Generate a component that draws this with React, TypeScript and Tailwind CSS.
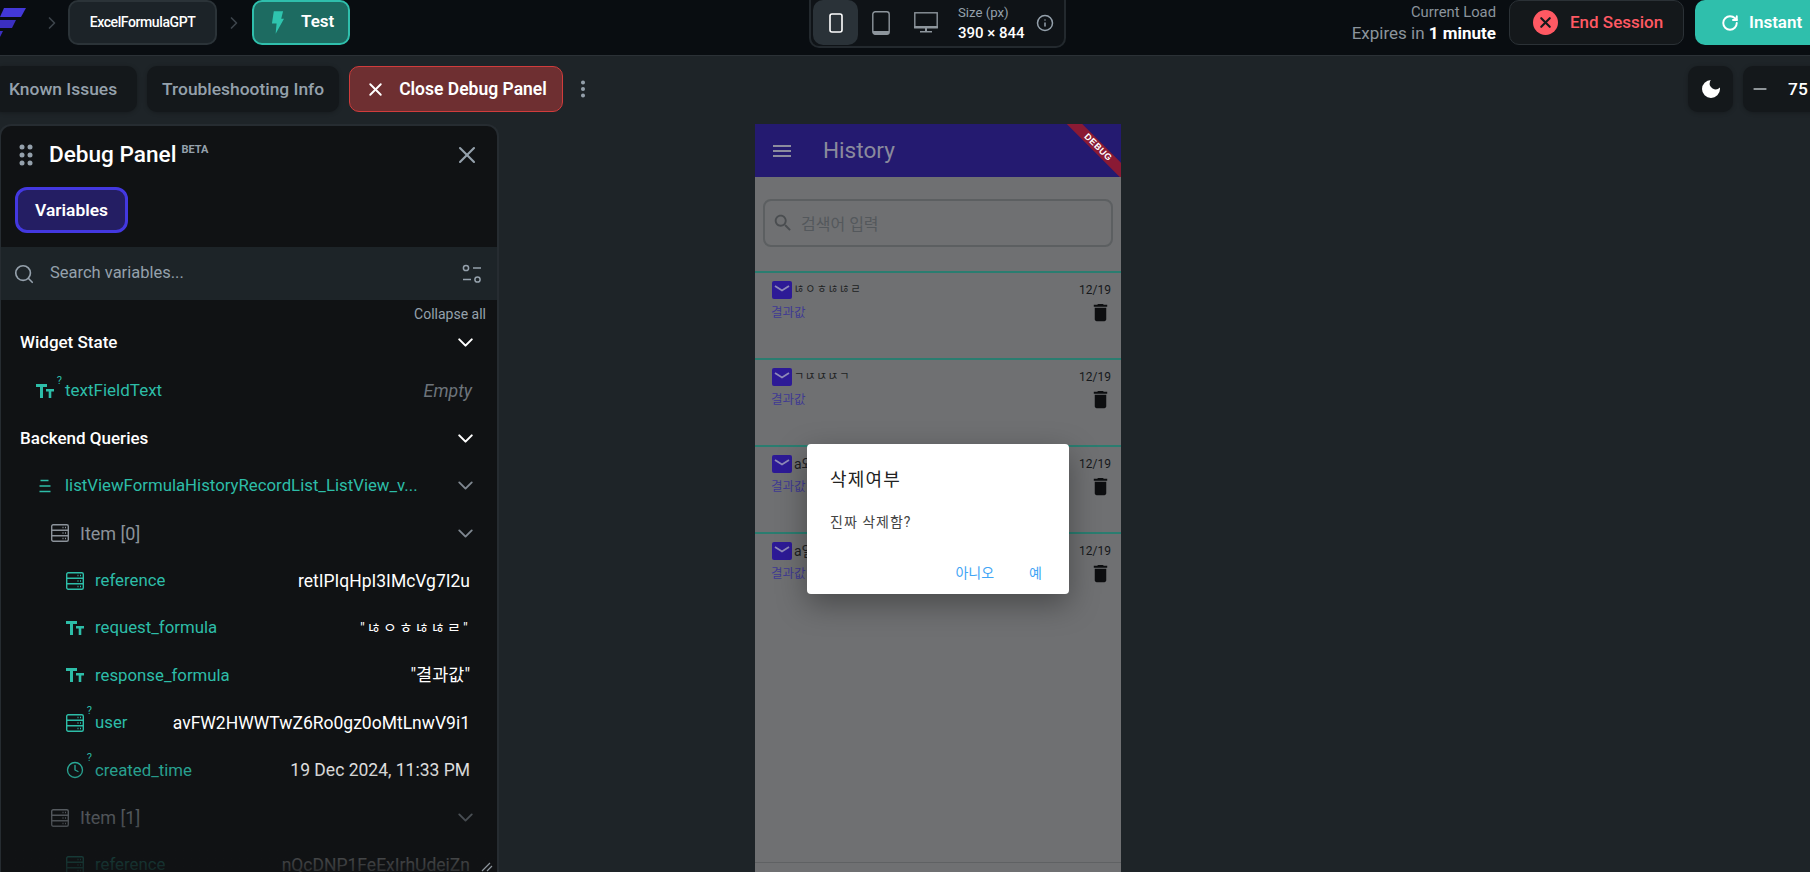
import { ChevronDown, ChevronRight, Clock, Info, Minus, MoreVertical, RotateCw, Search, X } from "lucide-react";
import type { ReactNode } from "react";

const sans = "font-['Roboto','Noto_Sans_CJK_KR',sans-serif]";

function TextIcon() {
  return (
    <svg viewBox="0 0 18 14" className="w-[18px] h-[14px] fill-current">
      <path d="M0 0h11v3H7v11H4V3H0zM10 5h8v2.4h-2.7V14h-2.6V7.4H10z" />
    </svg>
  );
}

function StorageIcon() {
  return (
    <svg viewBox="0 0 18 18" className="w-[18px] h-[18px] fill-none stroke-current" strokeWidth="1.4">
      <rect x="0.7" y="0.7" width="16.6" height="16.6" rx="1.5" />
      <path d="M1 6.3h16M1 11.7h16" />
      <path d="M11.5 3.5h1M14 3.5h1M11.5 9h1M14 9h1M11.5 14.5h1M14 14.5h1" />
    </svg>
  );
}

function ListIcon() {
  return (
    <svg viewBox="0 0 12 14" className="w-[12px] h-[14px] stroke-current" strokeWidth="1.4">
      <path d="M1.5 1.5h8M0.5 7h11M0.5 12.5h11" />
    </svg>
  );
}

function Optional({ children }: { children: ReactNode }) {
  return (
    <span className="relative flex items-center justify-center">
      {children}
      <span className="absolute -top-[9px] -right-[8px] text-[11px] leading-none">?</span>
    </span>
  );
}

function Row({
  indent,
  icon,
  label,
  value,
  chevron,
  muted,
  valueClass,
}: {
  indent: string;
  icon: ReactNode;
  label: string;
  value?: string;
  chevron?: boolean;
  muted?: boolean;
  valueClass?: string;
}) {
  return (
    <div className={`flex items-center h-[47.4px] ${muted ? "text-[18px] text-[#8b929a]" : "text-[16.8px] text-[#2dbda8]"} ${indent}`}>
      <span className="w-[18px] flex justify-center shrink-0">{icon}</span>
      <span className="ml-[11px] truncate">{label}</span>
      {value && <span className={`ml-auto mr-[27px] whitespace-nowrap ${valueClass ?? "text-[17.5px] text-white"}`}>{value}</span>}
      {chevron && <ChevronDown className="ml-auto mr-[19px] w-[25px] h-[25px] text-[#7f8790] shrink-0" strokeWidth={1.8} />}
    </div>
  );
}

function Section({ title }: { title: string }) {
  return (
    <div className="flex items-center justify-between h-[47.4px] pl-[19px] pr-[19px] text-[17px] font-medium text-white">
      {title}
      <ChevronDown className="w-[25px] h-[25px]" strokeWidth={2} />
    </div>
  );
}

function HistoryRow({ title, titleClass }: { title: string; titleClass?: string }) {
  return (
    <div className="h-[87px] border-t-2 border-[#2a7d70] relative pl-[9px] pr-[10px] pt-[7px] flex justify-between">
      <div>
        <div className="flex items-center h-[20px]">
          <svg viewBox="0 0 20 18" className="w-[20px] h-[18px] ml-[8px] shrink-0">
            <rect width="20" height="18" rx="2" fill="#2d1a96" />
            <path d="M3 5l7 4.5L17 5" fill="none" stroke="#8f8ab8" strokeWidth="1.8" />
          </svg>
          <span className={`ml-[2px] text-[#1d1f22] whitespace-nowrap ${titleClass ?? "text-[11px] tracking-[1.2px]"}`}>{title}</span>
        </div>
        <div className="mt-[2px] ml-[7px] text-[12.5px] leading-[22px] text-[#3f3a92]">결과값</div>
      </div>
      <div className="flex flex-col items-end">
        <span className="text-[12px] leading-[20px] text-[#16181b]">12/19</span>
        <svg viewBox="0 0 24 24" className="w-[23px] h-[23px] -mr-[1px] mt-[1px] fill-[#0d0e10]">
          <path d="M6 19c0 1.1.9 2 2 2h8c1.1 0 2-.9 2-2V7H6v12zM19 4h-3.5l-1-1h-5l-1 1H5v2h14V4z" />
        </svg>
      </div>
    </div>
  );
}

function DarkButton({ children, className }: { children: ReactNode; className?: string }) {
  return (
    <div className={`h-[46px] flex items-center rounded-[10px] bg-[#14181b] shadow-[0_1px_4px_rgba(0,0,0,0.25)] text-[#95a1ac] text-[17.4px] font-medium shrink-0 ${className ?? ""}`}>
      {children}
    </div>
  );
}

export default function App() {
  return (
    <div className={`w-[1810px] h-[872px] overflow-hidden flex flex-col bg-[#1e2428] ${sans}`}>
      {/* top bar */}
      <header className="h-[56px] shrink-0 flex items-start bg-[#090d11] border-b border-[#2b3136]">
        <div className="w-[809px] shrink-0 flex items-center h-[45px]">
          <svg viewBox="0 0 26 32" className="w-[26px] h-[32px] mt-[3px] shrink-0">
            <path d="M4 0h22l-5 9H0z" fill="#4338d8" />
            <path d="M-2 12h18l-4 8H-6zM-5 23h8l-4 8h-8z" fill="#3b2fc0" />
          </svg>
          <ChevronRight className="ml-[16px] w-[20px] h-[20px] text-[#3d444b]" />
          <div className="ml-[6px] w-[149px] h-[45px] -mt-[1px] flex items-center justify-center rounded-[10px] bg-[#1c2328] border-2 border-[#2b3338] text-[14px] tracking-[-0.4px] font-medium text-white">
            ExcelFormulaGPT
          </div>
          <ChevronRight className="ml-[7px] w-[20px] h-[20px] text-[#3d444b]" />
          <div className="ml-[8px] w-[98px] h-[45px] -mt-[1px] flex items-center rounded-[10px] bg-[#1d6b61] border-2 border-[#2fbfac] text-[17px] font-semibold text-white">
            <svg viewBox="0 0 14 24" className="ml-[17px] w-[13px] h-[23px] fill-[#2fc4ae]">
              <path d="M3 0h10l-2 8h3L5 24l1-11H1z" />
            </svg>
            <span className="ml-[17px]">Test</span>
          </div>
        </div>

        <div className="w-[257px] h-[49px] -mt-[1px] shrink-0 flex items-center rounded-b-[10px] border-2 border-t-0 border-[#23292e] bg-[#0f1317] pl-[2px]">
          <div className="w-[45px] h-[45px] rounded-[10px] bg-[#2a3238] flex items-center justify-center">
            <svg viewBox="0 0 14 20" className="w-[14px] h-[20px]">
              <rect x="1" y="1" width="12" height="18" rx="2" fill="none" stroke="#fff" strokeWidth="1.6" />
            </svg>
          </div>
          <div className="w-[45px] flex justify-center">
            <svg viewBox="0 0 18 24" className="w-[18px] h-[24px]">
              <rect x="0.8" y="0.8" width="16.4" height="22.4" rx="2.5" fill="none" stroke="#8d959c" strokeWidth="1.4" />
              <path d="M1 20h16v1.5a2 2 0 0 1-2 2H3a2 2 0 0 1-2-2z" fill="#8d959c" />
            </svg>
          </div>
          <div className="w-[45px] flex justify-center">
            <svg viewBox="0 0 24 22" className="w-[24px] h-[22px]">
              <rect x="0.8" y="0.8" width="22.4" height="15" fill="none" stroke="#8d959c" strokeWidth="1.4" />
              <path d="M0 14h24v2H0zM11 16h2v3h-2zM6 19h12v1.4H6z" fill="#8d959c" />
            </svg>
          </div>
          <div className="ml-[10px] flex flex-col">
            <span className="text-[13.2px] leading-[17px] text-[#95a1ac]">Size (px)</span>
            <span className="mt-[4px] text-[15px] leading-[17px] font-medium text-white">390 × 844</span>
          </div>
          <Info className="ml-[11px] w-[18px] h-[18px] text-[#95a1ac]" />
        </div>

        <div className="w-[430px] shrink-0 h-[45px] flex flex-col items-end justify-center">
          <span className="text-[14.8px] leading-[20px] text-[#8b949c]">Current Load</span>
          <span className="text-[17px] leading-[22px] text-[#8b949c]">
            Expires in <b className="font-bold text-white">1 minute</b>
          </span>
        </div>
        <div className="ml-[13px] w-[175px] h-[45px] shrink-0 flex items-center rounded-[10px] bg-[#14181b] border border-[#2b3136] text-[17px] font-medium text-[#ff5963]">
          <span className="ml-[23px] w-[25px] h-[25px] rounded-full bg-[#ff5963] flex items-center justify-center">
            <X className="w-[17px] h-[17px] text-[#14181b]" strokeWidth={3} />
          </span>
          <span className="ml-[12px]">End Session</span>
        </div>
        <div className="ml-[11px] w-[170px] h-[45px] shrink-0 flex items-center rounded-[10px] bg-[#2fbfac] text-[17px] font-semibold text-white">
          <RotateCw className="ml-[26px] w-[18px] h-[18px]" strokeWidth={2.6} />
          <span className="ml-[10px]">Instant</span>
        </div>
      </header>

      {/* toolbar */}
      <div className="h-[68px] shrink-0 flex items-start pt-[10px]">
        <div className="w-[1688px] shrink-0 flex items-center">
          <DarkButton className="-ml-[7px] pl-[16px] pr-[20px]">Known Issues</DarkButton>
          <DarkButton className="ml-[10px] px-[15px]">Troubleshooting Info</DarkButton>
          <div className="ml-[10px] w-[214px] h-[46px] flex items-center rounded-[10px] bg-[#6e2f31] border-[1.5px] border-[#d13c3c] text-[17.5px] font-semibold text-white shrink-0">
            <X className="ml-[15px] w-[21px] h-[21px]" strokeWidth={2.2} />
            <span className="ml-[13px] whitespace-nowrap">Close Debug Panel</span>
          </div>
          <MoreVertical className="ml-[9px] w-[22px] h-[22px] text-[#95a1ac]" strokeWidth={2.4} />
        </div>
        <DarkButton className="w-[45px] justify-center">
          <svg viewBox="0 0 24 24" className="w-[24px] h-[24px] fill-white">
            <path d="M12 3a9 9 0 1 0 9 9c0-.5 0-1-.1-1.4A6 6 0 0 1 11 4.5c0-.5.4-1 1-1.5z" />
          </svg>
        </DarkButton>
        <DarkButton className="ml-[10px] w-[100px] text-white font-bold">
          <Minus className="ml-[7px] w-[20px] h-[20px] text-[#b8bec4]" />
          <span className="ml-[18px]">75</span>
        </DarkButton>
      </div>

      <div className="flex-1 min-h-0 flex">
        {/* debug panel */}
        <aside className="relative w-[500px] -ml-px shrink-0 overflow-hidden flex flex-col rounded-t-[12px] bg-[#101214] border-t-2 border-x-2 border-[#262c31]">
          <div className="h-[121px] shrink-0 px-[16px]">
            <div className="flex items-center h-[61px] pb-[3px]">
              <svg viewBox="0 0 14 22" className="ml-[2px] w-[14px] h-[22px] fill-[#95a1ac]">
                <circle cx="3" cy="3" r="2.5" />
                <circle cx="11" cy="3" r="2.5" />
                <circle cx="3" cy="11" r="2.5" />
                <circle cx="11" cy="11" r="2.5" />
                <circle cx="3" cy="19" r="2.5" />
                <circle cx="11" cy="19" r="2.5" />
              </svg>
              <span className="ml-[16px] text-[22.6px] font-medium text-white">Debug Panel</span>
              <span className="ml-[5px] -mt-[10px] text-[11px] font-bold text-[#95a1ac]">BETA</span>
              <X className="ml-auto mr-[0px] w-[28px] h-[28px] text-[#95a1ac]" strokeWidth={1.8} />
            </div>
            <div className="-ml-[2px] w-[113px] h-[46px] rounded-[12px] flex items-center justify-center bg-[#241e63] border-[3px] border-[#4338e0] text-[17.4px] font-semibold text-white">
              Variables
            </div>
          </div>

          <div className="h-[53px] shrink-0 flex items-center bg-[#1d2428] pl-[12px] pr-[15px]">
            <Search className="w-[22px] h-[22px] text-[#95a1ac]" strokeWidth={1.8} />
            <span className="ml-[15px] text-[16.5px] text-[#95a1ac]">Search variables...</span>
            <svg viewBox="0 0 20 20" className="ml-auto w-[20px] h-[20px] fill-none stroke-[#95a1ac]" strokeWidth="1.5">
              <circle cx="4" cy="4" r="2.6" />
              <circle cx="15.5" cy="15.5" r="2.6" />
              <path d="M11 4h8M1 15.5h8" />
            </svg>
          </div>

          <div className="h-[19px] shrink-0 flex justify-end items-center pr-[11px] pt-[8px] text-[14px] leading-none text-[#95a1ac]">Collapse all</div>

          <div>
            <Section title="Widget State" />
            <div className="flex items-center h-[48.4px] text-[17px] pl-[35px] pt-[1px] text-[#2dbda8]">
              <Optional><TextIcon /></Optional>
              <span className="ml-[11px]">textFieldText</span>
              <span className="ml-auto mr-[25px] italic text-[17.8px] text-[#6d747b]">Empty</span>
            </div>
            <Section title="Backend Queries" />
            <Row indent="pl-[35px]" icon={<ListIcon />} label="listViewFormulaHistoryRecordList_ListView_v..." chevron />
            <Row indent="pl-[50px]" icon={<StorageIcon />} label="Item [0]" chevron muted />
            <Row indent="pl-[65px]" icon={<StorageIcon />} label="reference" value="retIPIqHpI3IMcVg7I2u" />
            <Row indent="pl-[65px]" icon={<TextIcon />} label="request_formula" value={'"ㄶㅇㅎㄶㄶㄹ"'} valueClass="text-white text-[15px] tracking-[2.2px]" />
            <Row indent="pl-[65px]" icon={<TextIcon />} label="response_formula" value={'"결과값"'} />
            <Row indent="pl-[65px]" icon={<Optional><StorageIcon /></Optional>} label="user" value="avFW2HWWTwZ6Ro0gz0oMtLnwV9i1" />
            <Row indent="pl-[65px]" icon={<Optional><Clock className="w-[18px] h-[18px]" strokeWidth={1.8} /></Optional>} label="created_time" value="19 Dec 2024, 11:33 PM" />
            <Row indent="pl-[50px]" icon={<StorageIcon />} label="Item [1]" chevron muted />
            <Row indent="pl-[65px]" icon={<StorageIcon />} label="reference" value="nQcDNP1FeExIrhUdeiZn" />
          </div>

          <div className="absolute left-0 right-0 bottom-0 h-[125px] bg-gradient-to-b from-[#10121400] to-[#101214e0]" />
          <svg viewBox="0 0 12 10" className="absolute right-[4px] bottom-0 w-[12px] h-[10px] stroke-[#8d959c]" strokeWidth="1.2">
            <path d="M1 9l8-8M6 9l5-5" />
          </svg>
        </aside>

        {/* device preview */}
        <main className="ml-[256px] w-[366px] shrink-0 relative flex flex-col overflow-hidden bg-[#6f7072]">
          <div className="h-[53px] shrink-0 relative overflow-hidden flex items-center bg-[#241a70]">
            <svg viewBox="0 0 18 12" className="ml-[18px] w-[18px] h-[12px] fill-[#8c8c9e]">
              <path d="M0 0h18v2H0zM0 5h18v2H0zM0 10h18v2H0z" />
            </svg>
            <span className="ml-[32px] text-[22.6px] text-[#8a8a9d]">History</span>
            <div className="absolute -right-[22px] top-[17.5px] w-[90px] h-[11px] rotate-45 bg-[#8a1a34] flex items-center justify-center text-[9px] font-bold tracking-[0.5px] text-white font-['Liberation_Sans']">
              DEBUG
            </div>
          </div>

          <div className="h-[94px] shrink-0 px-[8px] pt-[22px]">
            <div className="h-[48px] flex items-center rounded-[8px] border-2 border-[#5c5f61]">
              <svg viewBox="0 0 24 24" className="ml-[7px] w-[22px] h-[22px] fill-[#4a4d50]">
                <path d="M15.5 14h-.79l-.28-.27C15.41 12.59 16 11.11 16 9.5 16 5.91 13.09 3 9.5 3S3 5.91 3 9.5 5.91 16 9.5 16c1.61 0 3.09-.59 4.23-1.57l.27.28v.79l5 4.99L20.49 19l-4.99-5zm-6 0C7.01 14 5 11.99 5 9.5S7.01 5 9.5 5 14 7.01 14 9.5 11.99 14 9.5 14z" />
              </svg>
              <span className="ml-[7px] mt-[3px] text-[16px] text-[#54585c]">검색어 입력</span>
            </div>
          </div>

          <HistoryRow title="ㄶㅇㅎㄶㄶㄹ" />
          <HistoryRow title="ㄱㄵㄵㄵㄱ" />
          <HistoryRow title="a와" titleClass="text-[14px]" />
          <HistoryRow title="a일" titleClass="text-[14px]" />

          <div className="flex-1" />
          <div className="h-[10px] shrink-0 border-t border-[#5f6163]" />

          {/* dialog over the list */}
          <div className="absolute left-[52px] top-[320px] w-[262px] h-[150px] rounded-[4px] bg-white shadow-[0_10px_30px_rgba(0,0,0,0.35)] px-[23px] pt-[24px]">
            <div className="text-[18px] leading-[24px] tracking-[1.2px] text-[#222]">삭제여부</div>
            <div className="mt-[20px] text-[14px] leading-[20px] tracking-[1px] text-[#444]">진짜 삭제함?</div>
            <div className="mt-[31px] flex justify-end text-[14px] leading-[20px] text-[#42a5f5]">
              <span>아니오</span>
              <span className="ml-[35px] mr-[4px]">예</span>
            </div>
          </div>
        </main>
      </div>
    </div>
  );
}
